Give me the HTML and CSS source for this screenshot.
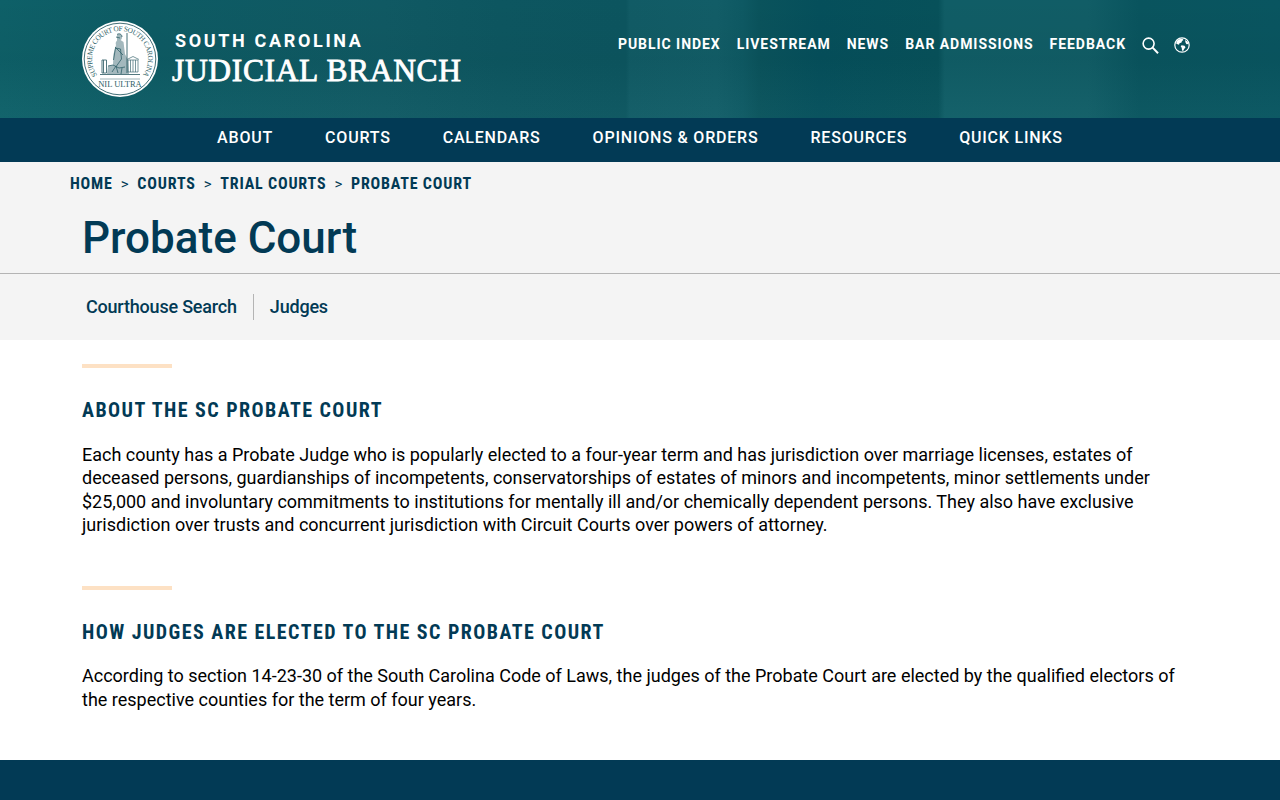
FILE: index.html
```html
<!DOCTYPE html>
<html lang="en">
<head>
<meta charset="utf-8">
<title>Probate Court | South Carolina Judicial Branch</title>
<link rel="stylesheet" href="styles.css">
</head>
<body>
<header class="masthead">
  <a class="brand" href="#">
    <svg class="seal" viewBox="0 0 76 76" width="76" height="76" aria-hidden="true">
      <defs><path id="seal-arc" d="M15.100 54.100A28 28 0 1 1 60.900 54.100"/></defs>
      <circle cx="38" cy="38" r="38" fill="#fff"/>
      <circle cx="38" cy="38" r="35.800" fill="none" stroke="#2f5f68" stroke-width=".9"/>
      <text class="seal-ring"><textPath href="#seal-arc" startOffset="50%" text-anchor="middle" textLength="122">SUPREME COURT OF SOUTH CAROLINA</textPath></text>
      <g transform="translate(0 6)">
        <path d="M35 7.500c2-1.500 5-.5 5 2.500 0 1.500-.5 2.500-1.500 3l3 2 1.500 12 3 6 1 14H25l1-8 5-1 .5-11 2.500-9c-.5-1.500-.5-3 1-4.500z" fill="#a3b8bd"/>
        <path d="M35 7.500c2-1.500 5-.5 5 2.500M31.500 33l2-12 5 1 1 10-5 7M26 39l5-1 6 3 6-1M34 10l4 1M33 20l8 8M30 45l4-6 2 7M40 41l-1 6" fill="none" stroke="#2f5f68" stroke-width=".8"/>
        <path d="M45 6v40" stroke="#2f5f68" stroke-width=".9"/>
        <path d="M46 33h10v12H46zM48.500 33v12M51 33v12M53.500 33v12M45 32.500l6-3 6 3" fill="none" stroke="#3f6a72" stroke-width=".7"/>
        <path d="M20 33h4.500v13H20zM21.500 33v13M18 47.500h40" fill="none" stroke="#3f6a72" stroke-width=".9"/>
      </g>
      <path d="M18 58h40" stroke="#5d8086" stroke-width=".6"/>
      <text class="seal-motto" x="38" y="65.800" text-anchor="middle">NIL ULTRA</text>
    </svg>
    <span class="brand-text">
      <span class="brand-state">SOUTH CAROLINA</span>
      <span class="brand-name">JUDICIAL BRANCH</span>
    </span>
  </a>
  <nav class="utility">
    <a href="#">PUBLIC INDEX</a>
    <a href="#">LIVESTREAM</a>
    <a href="#">NEWS</a>
    <a href="#">BAR ADMISSIONS</a>
    <a href="#">FEEDBACK</a>
    <svg class="icon icon-search" viewBox="0 0 18 18" width="17" height="17" aria-hidden="true"><circle cx="7" cy="7" r="5.800" fill="none" stroke="#fff" stroke-width="1.700"/><path d="M11 11l6 6.200" stroke="#fff" stroke-width="2.100" fill="none"/></svg>
    <svg class="icon" viewBox="0 0 16 16" width="16" height="16" aria-hidden="true"><circle cx="8" cy="8" r="7.200" fill="none" stroke="#fff" stroke-width="1.200"/><path d="M5 2.200l3.500-.4 1 1.200-1.500 1-.5 1.500-2 .8-.5 1.500-2.700-1L2.500 4zM7.500 8.200l3 .6 1 1.500-1.500 2-1 2-1-1-.3-2.500-1-1.200zM11 3l2.500 1.500 1 2.500-2 .3-1-1.700z" fill="#fff"/></svg>
  </nav>
</header>
<nav class="mainnav">
  <a href="#">ABOUT</a>
  <a href="#">COURTS</a>
  <a href="#">CALENDARS</a>
  <a href="#">OPINIONS &amp; ORDERS</a>
  <a href="#">RESOURCES</a>
  <a href="#">QUICK LINKS</a>
</nav>
<section class="pagehead">
  <div class="crumbs">
    <a href="#">HOME</a><span class="sep">&gt;</span><a href="#">COURTS</a><span class="sep">&gt;</span><a href="#">TRIAL COURTS</a><span class="sep">&gt;</span><a href="#">PROBATE COURT</a>
  </div>
  <h1>Probate Court</h1>
  <nav class="subnav">
    <a href="#">Courthouse Search</a>
    <a href="#">Judges</a>
  </nav>
</section>
<main class="content">
  <section class="block">
    <h2>ABOUT THE SC PROBATE COURT</h2>
    <p>Each county has a Probate Judge who is popularly elected to a four-year term and has jurisdiction over marriage licenses, estates of deceased persons, guardianships of incompetents, conservatorships of estates of minors and incompetents, minor settlements under $25,000 and involuntary commitments to institutions for mentally ill and/or chemically dependent persons. They also have exclusive jurisdiction over trusts and concurrent jurisdiction with Circuit Courts over powers of attorney.</p>
  </section>
  <section class="block">
    <h2>HOW JUDGES ARE ELECTED TO THE SC PROBATE COURT</h2>
    <p>According to section 14-23-30 of the South Carolina Code of Laws, the judges of the Probate Court are elected by the qualified electors of the respective counties for the term of four years.</p>
  </section>
</main>
<footer class="foot"></footer>
</body>
</html>
```
FILE: styles.css
```css
* { box-sizing: border-box; }
html, body { margin: 0; padding: 0; }
body { font-family: Roboto, "Liberation Sans", sans-serif; color: #000; background: #fff; height: 800px; overflow: hidden; display: flex; flex-direction: column; }
a { color: inherit; text-decoration: none; }

.masthead {
  height: 118px; flex: none; display: flex; justify-content: space-between; padding: 21px 90px 0 82px;
  background:
    linear-gradient(180deg, rgba(0,0,0,.01) 0%, rgba(0,0,0,.04) 50%, rgba(255,255,255,.02) 100%),
    linear-gradient(90deg, #0e6169 0%, #0d5c65 12%, #105a64 30%, #0d5761 39%, #0c5660 48.900%, #115c66 49.200%, #125e68 56%, #0e5a64 58%, #0a545d 59.300%, #05505c 64%, #07525b 73.300%, #105e67 73.800%, #115e67 85%, #09555f 89%, #095661 100%);
}
.brand { display: flex; color: #fff; }
.seal { flex: none; }
.seal-ring { font-family: "Liberation Serif", serif; font-size: 7.300px; fill: #2f5f68; }
.seal-motto { font-family: "Liberation Serif", serif; font-size: 8.500px; fill: #2f5f68; }
.brand-text { display: flex; flex-direction: column; margin-left: 13px; padding-top: 9px; }
.brand-state { font-size: 18px; font-weight: 700; letter-spacing: 2.650px; line-height: 21px; margin-left: 4px; white-space: nowrap; }
.brand-name { font-family: "Liberation Serif", serif; font-size: 31.500px; line-height: 40px; letter-spacing: .66px; margin-left: 1px; white-space: nowrap; -webkit-text-stroke: .8px #fff; }
.utility { display: flex; align-items: center; gap: 16px; height: 46px; color: #fff; font-size: 14px; font-weight: 700; letter-spacing: .95px; }
.icon { flex: none; margin-top: 2px; }
.icon-search { margin-right: -1px; }

.mainnav { height: 44px; flex: none; display: flex; justify-content: center; align-items: center; gap: 52px; padding-bottom: 6px; background: #023a55; color: #fff; font-size: 16px; font-weight: 500; letter-spacing: .8px; }

.pagehead { height: 178px; flex: none; background: #f4f4f4; color: #023a55; }
.crumbs { height: 42px; padding: 12px 0 0 70px; font-size: 16px; font-weight: 700; font-stretch: condensed; letter-spacing: .8px; line-height: 19px; white-space: nowrap; }
.sep { margin: 0 8px; font-weight: 400; font-stretch: normal; font-size: 15px; }
h1 { margin: 0; height: 70px; padding-left: 82px; font-size: 44px; font-weight: 500; line-height: 68px; border-bottom: 1px solid #b4b4b4; }
.subnav { display: flex; align-items: center; padding: 20px 0 0 86px; font-size: 18px; font-weight: 500; letter-spacing: -.2px; }
.subnav a { line-height: 26px; }
.subnav a + a { margin-left: 16px; padding-left: 16px; border-left: 1px solid #b4b4b4; }

.content { flex: 1; min-height: 0; padding: 24px 82px 0; }
.block { margin-bottom: 49px; }
.block::before { content: ""; display: block; width: 90px; height: 4px; background: #fde1c4; }
h2 { margin: 28px 0 19px; font-size: 20px; font-weight: 700; font-stretch: condensed; line-height: 28px; letter-spacing: 1.450px; color: #023a55; }
.block + .block h2 { margin-bottom: 18.800px; }
p { margin: 0; font-size: 18px; line-height: 23.400px; }

.foot { height: 40px; flex: none; background: #023a55; }
```
